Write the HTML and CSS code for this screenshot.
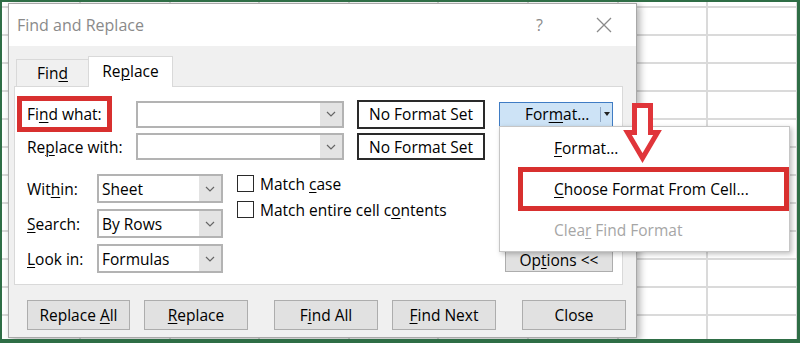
FILE: index.html
```html
<!DOCTYPE html>
<html>
<head>
<meta charset="utf-8">
<link rel="stylesheet" href="styles.css">
</head>
<body>
<div class="screen">
  <div class="dialog">
    <div class="titlebar">
      <span class="title">Find and Replace</span>
      <span class="help">?</span>
      <svg class="close" width="16" height="16" viewBox="0 0 16 16"><path d="M1 1 L15 15 M15 1 L1 15" stroke="#8a8a8a" stroke-width="1.3" fill="none"/></svg>
    </div>
    <div class="body">
      <div class="tabs">
        <div class="tab"><span>Fin<u>d</u></span></div>
        <div class="tab active"><span>Re<u>p</u>lace</span></div>
      </div>
      <div class="pane">
        <div class="row row1">
          <div class="label hl"><span>Fi<u>n</u>d what:</span></div>
          <div class="combo wide"><span class="value"></span><span class="drop"><svg width="10" height="6" viewBox="0 0 10 6"><polyline points="1,1 5,5 9,1" fill="none" stroke="#666" stroke-width="1.2"/></svg></span></div>
          <div class="nfs"><span>No Format Set</span></div>
          <div class="split"><span class="split-main">For<u>m</u>at...</span><span class="split-sep"></span><span class="split-arrow"><span class="tri"></span></span></div>
        </div>
        <div class="row row2">
          <div class="label"><span>Re<u>p</u>lace with:</span></div>
          <div class="combo wide"><span class="value"></span><span class="drop"><svg width="10" height="6" viewBox="0 0 10 6"><polyline points="1,1 5,5 9,1" fill="none" stroke="#666" stroke-width="1.2"/></svg></span></div>
          <div class="nfs"><span>No Format Set</span></div>
        </div>
        <div class="options">
          <div class="selects">
            <div class="sel-row"><span class="slabel">Wit<u>h</u>in:</span><div class="combo small"><span class="value">Sheet</span><span class="drop"><svg width="10" height="6" viewBox="0 0 10 6"><polyline points="1,1 5,5 9,1" fill="none" stroke="#666" stroke-width="1.2"/></svg></span></div></div>
            <div class="sel-row"><span class="slabel"><u>S</u>earch:</span><div class="combo small"><span class="value">By Rows</span><span class="drop"><svg width="10" height="6" viewBox="0 0 10 6"><polyline points="1,1 5,5 9,1" fill="none" stroke="#666" stroke-width="1.2"/></svg></span></div></div>
            <div class="sel-row"><span class="slabel"><u>L</u>ook in:</span><div class="combo small"><span class="value">Formulas</span><span class="drop"><svg width="10" height="6" viewBox="0 0 10 6"><polyline points="1,1 5,5 9,1" fill="none" stroke="#666" stroke-width="1.2"/></svg></span></div></div>
          </div>
          <div class="checks">
            <div class="check"><span class="box"></span><span>Match <u>c</u>ase</span></div>
            <div class="check"><span class="box"></span><span>Match entire cell c<u>o</u>ntents</span></div>
          </div>
          <div class="btn opt"><span>Op<u>t</u>ions &lt;&lt;</span></div>
        </div>
      </div>
      <div class="actions">
        <div class="btn b1"><span>Replace <u>A</u>ll</span></div>
        <div class="btn b2"><span><u>R</u>eplace</span></div>
        <div class="btn b3"><span>F<u>i</u>nd All</span></div>
        <div class="btn b4"><span><u>F</u>ind Next</span></div>
        <div class="btn b5"><span>Close</span></div>
      </div>
    </div>
  </div>
  <div class="menu">
    <div class="mi"><span><u>F</u>ormat...</span></div>
    <div class="mi hl"><span><u>C</u>hoose Format From Cell...</span></div>
    <div class="mi dis"><span>Clea<u>r</u> Find Format</span></div>
  </div>
  <svg class="arrow" width="48" height="70" viewBox="0 0 48 70"><polygon points="14.5,7.5 30.5,7.5 30.5,34.5 37.5,34.5 22.5,60 7.5,34.5 14.5,34.5" fill="#fff" stroke="#e0353a" stroke-width="5" stroke-linejoin="miter"/></svg>
</div>
</body>
</html>
```
FILE: styles.css
```css
html, body { margin: 0; padding: 0; }
body { background: #fff; }
.screen {
  width: 800px; height: 343px; box-sizing: border-box;
  border-style: solid; border-color: #2f6e46; border-width: 2px 3px 4px 2px;
  position: relative; overflow: hidden;
  background-color: #fff;
  background-image:
    repeating-linear-gradient(to bottom, transparent 0 4px, #dadada 4px 6px, transparent 6px 28px),
    repeating-linear-gradient(to right, transparent 0 77px, #dadada 77px 79px, transparent 79px 89.6px);
  font-family: "Open Sans", "Noto Sans", sans-serif;
  font-size: 15.5px; color: #000;
}
u { text-decoration: underline; text-underline-offset: 2px; text-decoration-thickness: 1px; }
.dialog {
  margin: 1px 0 0 6px; width: 629px; height: 335px; box-sizing: border-box;
  border: 1px solid #a8a8a8; background: #f0f0f0;
  box-shadow: 3px 2px 7px rgba(0,0,0,0.3);
  display: flex; flex-direction: column;
}
.titlebar { height: 42px; flex: none; background: #fff; display: flex; align-items: center; padding-left: 8px; }
.title { font-size: 16px; color: #8a8a8a; }
.help { margin-left: auto; font-size: 16px; color: #8a8a8a; width: 9px; }
.close { margin-left: 51px; margin-right: 24px; }
.body { flex: 1; padding-top: 10px; }
.tabs { display: flex; align-items: flex-end; margin-left: 7px; height: 30px; }
.tab {
  width: 72px; height: 27px; box-sizing: border-box;
  border: 1px solid #d9d9d9; border-bottom: none; border-right: none;
  display: flex; align-items: center; justify-content: center;
}
.tab.active {
  width: 85px; height: 31px; background: #fff; border-right: 1px solid #d9d9d9;
  position: relative; z-index: 1; margin-bottom: -1px; padding-bottom: 3px;
}
.pane { margin-left: 5px; width: 609px; height: 199px; box-sizing: border-box; border: 1px solid #d9d9d9; background: #fff; }
.row { display: flex; align-items: center; padding-left: 2px; }
.row1 { margin-top: 9px; height: 36px; }
.row2 { height: 29px; }
.label { width: 95px; height: 100%; box-sizing: border-box; border: 5px solid transparent; padding-left: 5px; display: flex; align-items: center; white-space: nowrap; }
.label.hl { border-color: #d8302f; }
.combo { display: flex; box-sizing: border-box; border: 2px solid #b3b3b3; background: #fff; }
.combo .value { flex: 1; display: flex; align-items: center; padding-left: 3px; }
.combo .drop { width: 22px; background: #e3e3e3; display: flex; align-items: center; justify-content: center; }
.combo.wide { margin-left: 24px; width: 208px; height: 27px; }
.combo.small { width: 126px; height: 29px; }
.nfs {
  margin-left: 13px; width: 128px; height: 29px; box-sizing: border-box;
  border: 2px solid #2a2a2a; background: #fff;
  display: flex; align-items: center; justify-content: center;
}
.row2 .nfs { height: 27px; }
.split {
  margin-left: 14px; width: 114px; height: 25px; box-sizing: border-box;
  border: 1px solid #3f7cc4; background: #cde3f6; display: flex; align-items: center;
}
.split-main { width: 75px; padding-left: 25px; }
.split-sep { width: 1px; height: 15px; background: #8ea6c4; }
.split-arrow { flex: 1; display: flex; justify-content: center; }
.tri { width: 0; height: 0; border-left: 3px solid transparent; border-right: 3px solid transparent; border-top: 4px solid #222; }
.options { margin-top: 13px; height: 99px; display: flex; padding-left: 12px; }
.selects { display: flex; flex-direction: column; gap: 6px; }
.sel-row { display: flex; align-items: center; height: 29px; }
.slabel { width: 70px; }
.checks { margin-left: 14px; margin-top: 1px; display: flex; flex-direction: column; gap: 9px; }
.check { display: flex; align-items: center; height: 17px; gap: 6px; white-space: nowrap; }
.box { width: 17px; height: 17px; box-sizing: border-box; border: 1px solid #2a2a2a; background: #fff; }
.btn {
  box-sizing: border-box; border: 1px solid #adadad; background: #e1e1e1;
  display: flex; align-items: center; justify-content: center; white-space: nowrap;
}
.opt { margin-left: auto; margin-right: 9px; align-self: flex-end; width: 108px; height: 24px; margin-bottom: 1px; }
.actions { display: flex; margin-top: 15px; padding-left: 18px; }
.actions .btn { width: 104px; height: 30px; }
.actions .b1 { width: 103px; }
.actions .b2 { margin-left: 14px; }
.actions .b3 { margin-left: 26px; }
.actions .b4 { margin-left: 14px; }
.actions .b5 { margin-left: 26px; }
.menu {
  position: absolute; left: 497px; top: 124px; width: 291px; height: 126px; box-sizing: border-box;
  border: 1px solid #c6c6c6; background: #fff; box-shadow: 2px 2px 5px rgba(0,0,0,0.25); z-index: 2;
}
.mi { height: 41px; display: flex; align-items: center; padding-left: 54px; white-space: nowrap; }
.mi.hl { margin: -1px 0 -2px 18px; height: 44px; box-sizing: border-box; border: 5px solid #d8302f; padding-left: 31px; }
.mi.dis { color: #a6a6a6; }
.arrow { position: absolute; left: 618px; top: 96px; z-index: 3; }
```
